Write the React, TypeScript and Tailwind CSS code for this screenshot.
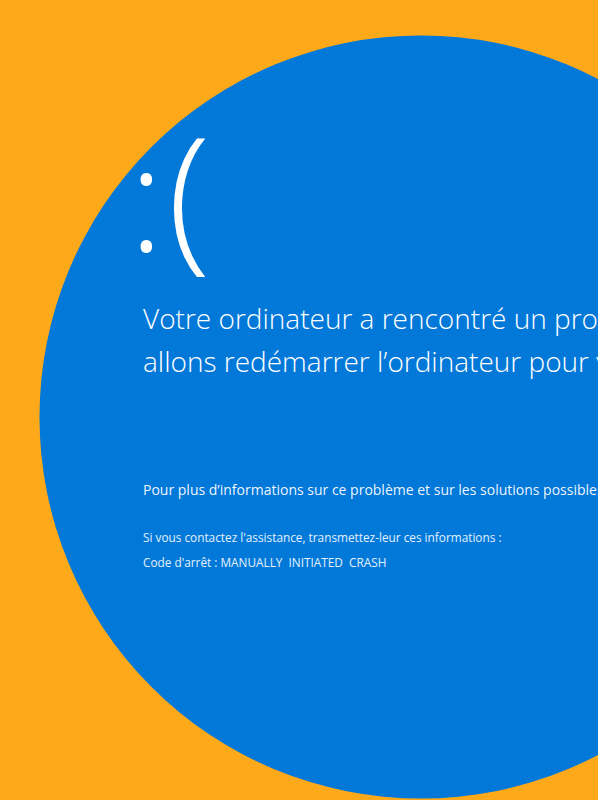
import React from 'react';

const App: React.FC = () => {
  return (
    <div className="relative w-[598px] h-[800px] overflow-hidden bg-[#fea919]">
      {/* Blue disc */}
      <svg className="absolute inset-0" width="598" height="800" viewBox="0 0 598 800">
        <circle cx="421" cy="417" r="381.5" fill="#0278d9" />
      </svg>

      <div
        className="relative flex flex-col pl-[143px] pt-[112px] text-white whitespace-nowrap"
        style={{ fontFamily: '"Open Sans", "Liberation Sans", sans-serif' }}
      >
        {/* Sad face */}
        <div className="ml-[-14px] flex items-baseline leading-none">
          <span className="text-[145px] font-light">:</span>
          <span className="ml-[4px] text-[158px] font-light">(</span>
        </div>

        <div className="mt-[27px] text-[28px] leading-[43px] font-light">
          <p>Votre ordinateur a rencontré un problème et doit redémarrer. Nous</p>
          <p>allons redémarrer l’ordinateur pour vous.</p>
        </div>

        <p className="mt-[97px] text-[14px] leading-[20px] font-normal text-white/95">
          Pour plus d’informations sur ce problème et sur les solutions possibles, visitez https://www.windows.com/stopcode
        </p>

        <div className="mt-[27px] flex flex-col gap-[5px] text-[11.8px] leading-[20px] font-normal text-white/90">
          <p>Si vous contactez l'assistance, transmettez-leur ces informations :</p>
          <p>Code d'arrêt : MANUALLY&nbsp; INITIATED&nbsp; CRASH</p>
        </div>
      </div>
    </div>
  );
};

export default App;
